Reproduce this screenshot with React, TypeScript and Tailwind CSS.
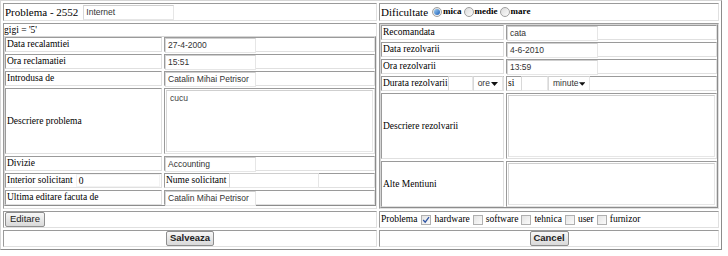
/* Problem ticket edit form — old-school bordered table look, rebuilt with grid/flex. */

const SERIF = "font-['Liberation_Serif','Times_New_Roman',serif]";
const SANS = "font-['Liberation_Sans',Arial,sans-serif]";
// outset border (table) vs inset border (cell)
const TBL = "border border-t-[#d6d6d6] border-l-[#d6d6d6] border-r-[#8c8c8c] border-b-[#8c8c8c] bg-white";
const CELL = "border border-t-[#9a9a9a] border-l-[#9a9a9a] border-r-[#e0e0e0] border-b-[#e0e0e0] bg-white";
const BOX = "border border-t-[#cfcfcf] border-l-[#d8d8d8] border-r-[#e6e6e6] border-b-[#e6e6e6] bg-white";

function Field({ value, w }: { value?: string; w: string }) {
  return (
    <div
      className={`${BOX} ${w} h-[15px] flex-shrink-0 overflow-hidden whitespace-nowrap px-[2px] ${SANS} text-[8.5px] leading-[13px] text-[#333]`}
    >
      {value}
    </div>
  );
}

function Select({ label, w }: { label: string; w: string }) {
  return (
    <div
      className={`${BOX} ${w} h-[15px] flex-shrink-0 flex items-center justify-between px-[4px] ${SANS} text-[8.5px] text-[#333]`}
    >
      <span>{label}</span>
      <svg width="7" height="4" viewBox="0 0 7 4">
        <path d="M0 0 H7 L3.5 4 Z" fill="#111" />
      </svg>
    </div>
  );
}

function Radio({ checked }: { checked?: boolean }) {
  return (
    <span className="inline-flex h-[10px] w-[10px] flex-shrink-0 items-center justify-center rounded-full border border-[#a0a0a0] bg-gradient-to-br from-[#dcdcdc] to-[#fbfbfb]">
      {checked && (
        <span className="h-[6px] w-[6px] rounded-full bg-gradient-to-br from-[#9fd0f5] to-[#1b5fb5]" />
      )}
    </span>
  );
}

function Check({ checked }: { checked?: boolean }) {
  return (
    <span className="inline-flex h-[10px] w-[10px] flex-shrink-0 items-center justify-center border border-[#b0b0b0] bg-gradient-to-br from-[#e4e4e4] to-[#fbfbfb]">
      {checked && (
        <svg width="8" height="8" viewBox="0 0 8 8">
          <path d="M1.2 4 L3.2 6.2 L7 1.2" fill="none" stroke="#2f55a4" strokeWidth="1.3" />
        </svg>
      )}
    </span>
  );
}

function Btn({ label, w, bold }: { label: string; w: string; bold?: boolean }) {
  return (
    <div
      className={`${w} h-[15px] flex items-center justify-center rounded-[2px] border border-[#8e8e8e] bg-gradient-to-b from-[#f7f7f7] to-[#d9d9d9] ${SANS} text-[9.5px] text-[#222] ${bold ? "font-semibold" : ""}`}
    >
      {label}
    </div>
  );
}

function Label({ children, h = "h-[15px]" }: { children: React.ReactNode; h?: string }) {
  return (
    <div className={`${CELL} ${h} flex items-center whitespace-nowrap px-[1px] text-[9.5px]`}>{children}</div>
  );
}

export default function App() {
  return (
    <div className={`h-[256px] w-[728px] bg-white text-black ${SERIF}`}>
      <div
        className={`${TBL} grid h-[250px] w-[722px] grid-cols-[374px_340px] grid-rows-[18px_186px_17px_17px] gap-[2px] p-[2px]`}
      >
        {/* row 1 */}
        <div className={`${CELL} flex items-center gap-[5px] whitespace-nowrap px-[1px]`}>
          <span className="text-[11px]">Problema - 2552</span>
          <Field value="Internet" w="w-[91px]" />
        </div>
        <div className={`${CELL} flex items-center whitespace-nowrap px-[1px]`}>
          <span className="mr-[4px] text-[11px]">Dificultate</span>
          <Radio checked />
          <span className="ml-[1px] mr-[2px] text-[9px] font-bold">mica</span>
          <Radio />
          <span className="ml-[1px] mr-[2px] text-[9px] font-bold">medie</span>
          <Radio />
          <span className="ml-[1px] text-[9px] font-bold">mare</span>
        </div>

        {/* row 2 left */}
        <div className={`${CELL} flex flex-col`}>
          <div className="h-[12px] text-[9.5px] leading-[12px]">gigi = '5'</div>
          <div
            className={`${TBL} grid grid-cols-[157px_211px] grid-rows-[15px_15px_15px_66px_15px_15px_15px] gap-[2px]`}
          >
            <Label>Data recalamtiei</Label>
            <div className={CELL}>
              <Field value="27-4-2000" w="w-[91px]" />
            </div>
            <Label>Ora reclamatiei</Label>
            <div className={CELL}>
              <Field value="15:51" w="w-[91px]" />
            </div>
            <Label>Introdusa de</Label>
            <div className={CELL}>
              <Field value="Catalin Mihai Petrisor" w="w-[91px]" />
            </div>
            <Label h="h-[66px]">Descriere problema</Label>
            <div className={`${CELL} p-[1px]`}>
              <div className={`${BOX} h-full w-full px-[3px] pt-[1px] ${SANS} text-[8.5px] text-[#444]`}>cucu</div>
            </div>
            <Label>Divizie</Label>
            <div className={CELL}>
              <Field value="Accounting" w="w-[91px]" />
            </div>
            <div className={`${CELL} flex items-center gap-[3px] whitespace-nowrap px-[1px] text-[9.5px]`}>
              <span>Interior solicitant</span>
              <div className="h-[13px] w-[86px] border border-[#f3f3f3] px-[2px] leading-[12px]">0</div>
            </div>
            <div className={`${CELL} flex items-center gap-[3px] whitespace-nowrap px-[1px] text-[9.5px]`}>
              <span>Nume solicitant</span>
              <Field w="w-[90px]" />
            </div>
            <Label>Ultima editare facuta de</Label>
            <div className={CELL}>
              <Field value="Catalin Mihai Petrisor" w="w-[91px]" />
            </div>
          </div>
        </div>

        {/* row 2 right */}
        <div className={`${CELL} flex flex-col`}>
          <div
            className={`${TBL} grid flex-1 grid-cols-[123px_211px] grid-rows-[15px_15px_15px_15px_66px_1fr] gap-[2px]`}
          >
            <Label>Recomandata</Label>
            <div className={CELL}>
              <Field value="cata" w="w-[91px]" />
            </div>
            <Label>Data rezolvarii</Label>
            <div className={CELL}>
              <Field value="4-6-2010" w="w-[91px]" />
            </div>
            <Label>Ora rezolvarii</Label>
            <div className={CELL}>
              <Field value="13:59" w="w-[91px]" />
            </div>
            <div className={`${CELL} flex items-center whitespace-nowrap px-[1px] text-[9.5px]`}>
              <span className="flex-shrink-0">Durata rezolvarii</span>
              <Field w="w-[25px]" />
              <Select label="ore" w="w-[30px]" />
            </div>
            <div className={`${CELL} flex items-center whitespace-nowrap px-[1px] text-[9.5px]`}>
              <span className="w-[13px]">si</span>
              <Field w="w-[27px]" />
              <Select label="minute" w="w-[42px]" />
            </div>
            <Label h="h-full">Descriere rezolvarii</Label>
            <div className={`${CELL} p-[1px]`}>
              <div className={`${BOX} h-full w-full`} />
            </div>
            <Label h="h-full">Alte Mentiuni</Label>
            <div className={`${CELL} p-[1px]`}>
              <div className={`${BOX} h-full w-full`} />
            </div>
          </div>
        </div>

        {/* row 3 */}
        <div className={`${CELL} flex items-center px-[1px]`}>
          <Btn label="Editare" w="w-[40px]" />
        </div>
        <div className={`${CELL} flex items-center gap-[3px] whitespace-nowrap px-[1px] text-[9.5px]`}>
          <span className="mr-[1px]">Problema</span>
          <Check checked />
          <span>hardware</span>
          <Check />
          <span>software</span>
          <Check />
          <span>tehnica</span>
          <Check />
          <span>user</span>
          <Check />
          <span>furnizor</span>
        </div>

        {/* row 4 */}
        <div className={`${CELL} flex items-center justify-center`}>
          <Btn label="Salveaza" w="w-[48px]" bold />
        </div>
        <div className={`${CELL} flex items-center justify-center`}>
          <Btn label="Cancel" w="w-[39px]" bold />
        </div>
      </div>
    </div>
  );
}
